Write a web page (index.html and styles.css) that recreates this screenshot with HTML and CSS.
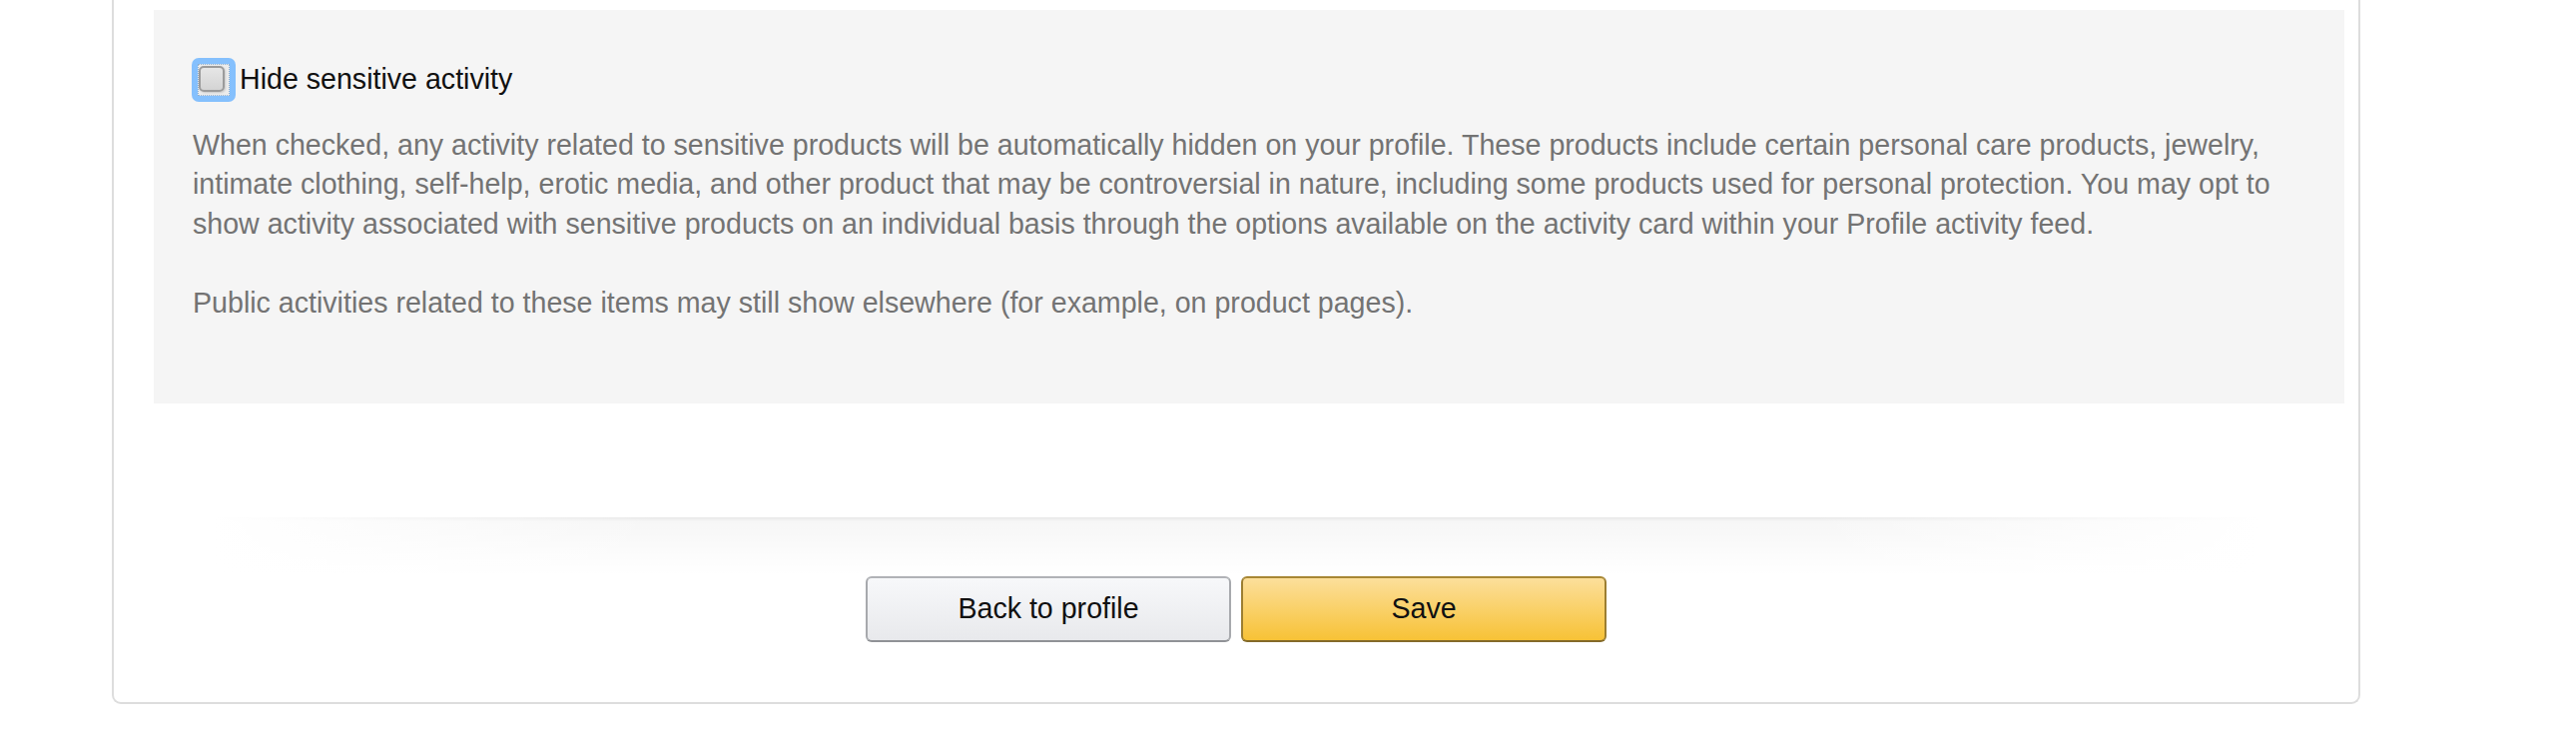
FILE: index.html
```html
<!DOCTYPE html>
<html lang="en">
<head>
<meta charset="utf-8">
<title>Profile privacy settings</title>
<link rel="stylesheet" href="styles.css">
</head>
<body>
<div class="card">
  <div class="panel">
    <label class="check-row">
      <span class="focus-ring"><span class="checkbox"></span></span>
      <span class="label-text">Hide sensitive activity</span>
    </label>
    <p class="desc">When checked, any activity related to sensitive products will be automatically hidden on your profile. These products include certain personal care products, jewelry, intimate clothing, self-help, erotic media, and other product that may be controversial in nature, including some products used for personal protection. You may opt to show activity associated with sensitive products on an individual basis through the options available on the activity card within your Profile activity feed.</p>
    <p class="desc desc-last">Public activities related to these items may still show elsewhere (for example, on product pages).</p>
  </div>
  <div class="divider"></div>
  <div class="actions">
    <button class="btn btn-secondary" type="button">Back to profile</button>
    <button class="btn btn-primary" type="button">Save</button>
  </div>
</div>
</body>
</html>
```
FILE: styles.css
```css
html, body {
  margin: 0;
  padding: 0;
  background: #ffffff;
}

body {
  font-family: "Liberation Sans", Arial, Helvetica, sans-serif;
  font-size: 28.6px;
  line-height: 39.6px;
  color: #111111;
}

.card {
  margin-left: 112px;
  width: 2252px;
  box-sizing: border-box;
  border: 2px solid #dddddd;
  border-top: none;
  border-radius: 0 0 9px 9px;
  padding: 10px 0 60px 0;
}

.panel {
  margin: 0 14px 0 40px;
  background: #f5f5f5;
  padding: 50px 39px 80px 39px;
}

.check-row {
  display: flex;
  align-items: center;
  gap: 4px;
  margin-left: -1px;
  height: 39.6px;
  cursor: pointer;
}

.focus-ring {
  width: 44px;
  height: 44px;
  box-sizing: border-box;
  border-radius: 7px;
  background: #85c0fd;
  padding: 6px;
  flex-shrink: 0;
}

.checkbox {
  display: block;
  width: 32px;
  height: 32px;
  box-sizing: border-box;
  border: 1px dotted #8fb0d0;
  background: #ececec;
  position: relative;
}

.checkbox::after {
  content: "";
  position: absolute;
  left: 0;
  top: 1px;
  width: 26px;
  height: 26px;
  box-sizing: border-box;
  border: 2px solid #9b9b9b;
  border-radius: 5px;
  background: linear-gradient(to bottom, #e6e6e6, #d4d4d4);
  box-shadow: 1px 1px 2px rgba(0, 0, 0, 0.15);
}

.label-text {
  color: #111111;
}

.desc {
  margin: 26px 0 0 0;
  color: #737373;
}

.desc-last {
  margin-top: 39.6px;
}

.divider {
  margin: 114px 100px 0 100px;
  height: 59px;
  background:
    linear-gradient(to right, rgba(255,255,255,1) 0%, rgba(255,255,255,0) 22%, rgba(255,255,255,0) 78%, rgba(255,255,255,1) 100%),
    linear-gradient(to bottom, rgba(0,0,0,0.09) 0px, rgba(0,0,0,0.035) 4px, rgba(0,0,0,0.012) 40px, rgba(0,0,0,0) 59px);
}

.actions {
  display: flex;
  justify-content: center;
  gap: 10px;
}

.btn {
  width: 366px;
  height: 66px;
  box-sizing: border-box;
  border-width: 2px;
  border-style: solid;
  border-radius: 6px;
  font-family: "Liberation Sans", Arial, Helvetica, sans-serif;
  font-size: 28.6px;
  color: #111111;
  padding: 0;
  cursor: pointer;
}

.btn-secondary {
  border-color: #b0b2b6 #a7a9ad #909296;
  background: linear-gradient(to bottom, #f7f8fa, #e8e9ec);
}

.btn-primary {
  border-color: #a88734 #9c7e31 #846a29;
  background: linear-gradient(to bottom, #fcdf9b, #f7c236);
}
```
